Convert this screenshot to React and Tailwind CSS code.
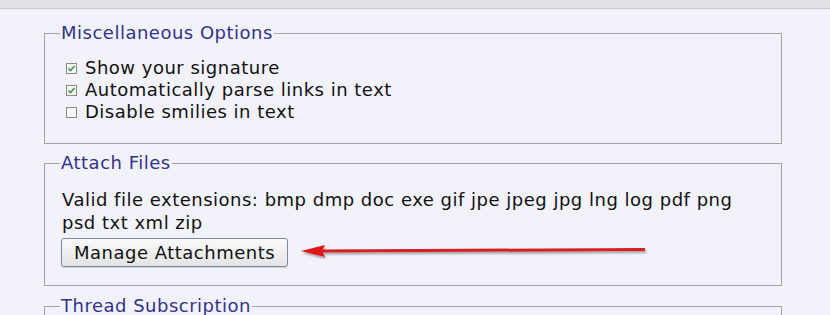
import React from 'react';

const Check = ({ checked }) => (
    <span className="inline-flex items-center justify-center w-[11px] h-[11px] border border-[#8a8a8a] bg-[#f7f7f7] mr-[8px] shrink-0">
        {checked && (
            <svg width="9" height="9" viewBox="0 0 9 9">
                <path d="M1.5 4.5 L3.6 6.6 L7.5 2" stroke="#3a9a3a" strokeWidth="1.6" fill="none" />
            </svg>
        )}
    </span>
);

const Box = ({ title, children, className = '' }) => (
    <fieldset className={`border border-[#a3a3a3] ml-[44px] w-[738px] px-[16px] pt-[8px] ${className}`}>
        <legend className="px-[1px] ml-[-1px] text-[#33338a] leading-[20px]">{title}</legend>
        {children}
    </fieldset>
);

const App = () => {
    return (
        <div className="w-[830px] h-[315px] overflow-hidden bg-[#f2f2fa] text-[18px] tracking-[0.5px] text-[#111]" style={{ fontFamily: '"DejaVu Sans", Verdana, sans-serif' }}>
            <div className="h-[9px] bg-[#e2e2e6] border-b border-[#c7c7cc]" />
            <div className="pt-[14px]">
                <Box title="Miscellaneous Options" className="h-[121px] pt-[14px]">
                    <div className="flex flex-col leading-[22px] pl-[5px]">
                        <label className="flex items-center"><Check checked />Show your signature</label>
                        <label className="flex items-center"><Check checked />Automatically parse links in text</label>
                        <label className="flex items-center"><Check />Disable smilies in text</label>
                    </div>
                </Box>
                <Box title="Attach Files" className="h-[133px] mt-[9px] pt-[15px]">
                    <p className="leading-[23px] pl-[1px]">
                        Valid file extensions: bmp dmp doc exe gif jpe jpeg jpg lng log pdf png<br />psd txt xml zip
                    </p>
                    <div className="flex items-center mt-[4px]">
                        <button className="h-[29px] px-[12px] border border-[#7f8a99] rounded-[3px] bg-gradient-to-b from-[#fafafa] to-[#e4e4e4] text-[18px] tracking-[0.5px] text-[#111] shadow-[0_1px_1px_rgba(0,0,0,0.15)]">
                            Manage Attachments
                        </button>
                        <svg width="350" height="16" viewBox="0 0 350 16" className="ml-[12px] mt-[-3px]">
                            <defs>
                                <filter id="sh" x="-5%" y="-50%" width="110%" height="200%">
                                    <feDropShadow dx="1" dy="2" stdDeviation="1.2" floodColor="#000" floodOpacity="0.35" />
                                </filter>
                            </defs>
                            <g filter="url(#sh)">
                                <path d="M20 6.5 L345 5 L345 8 L20 9.5 Z" fill="#d42020" />
                                <path d="M1 8 L25 2 L22 8 L25 14 Z" fill="#e01818" />
                            </g>
                        </svg>
                    </div>
                </Box>
                <Box title="Thread Subscription" className="h-[60px] mt-[10px]">
                    <div />
                </Box>
            </div>
        </div>
    );
};

export default App;
